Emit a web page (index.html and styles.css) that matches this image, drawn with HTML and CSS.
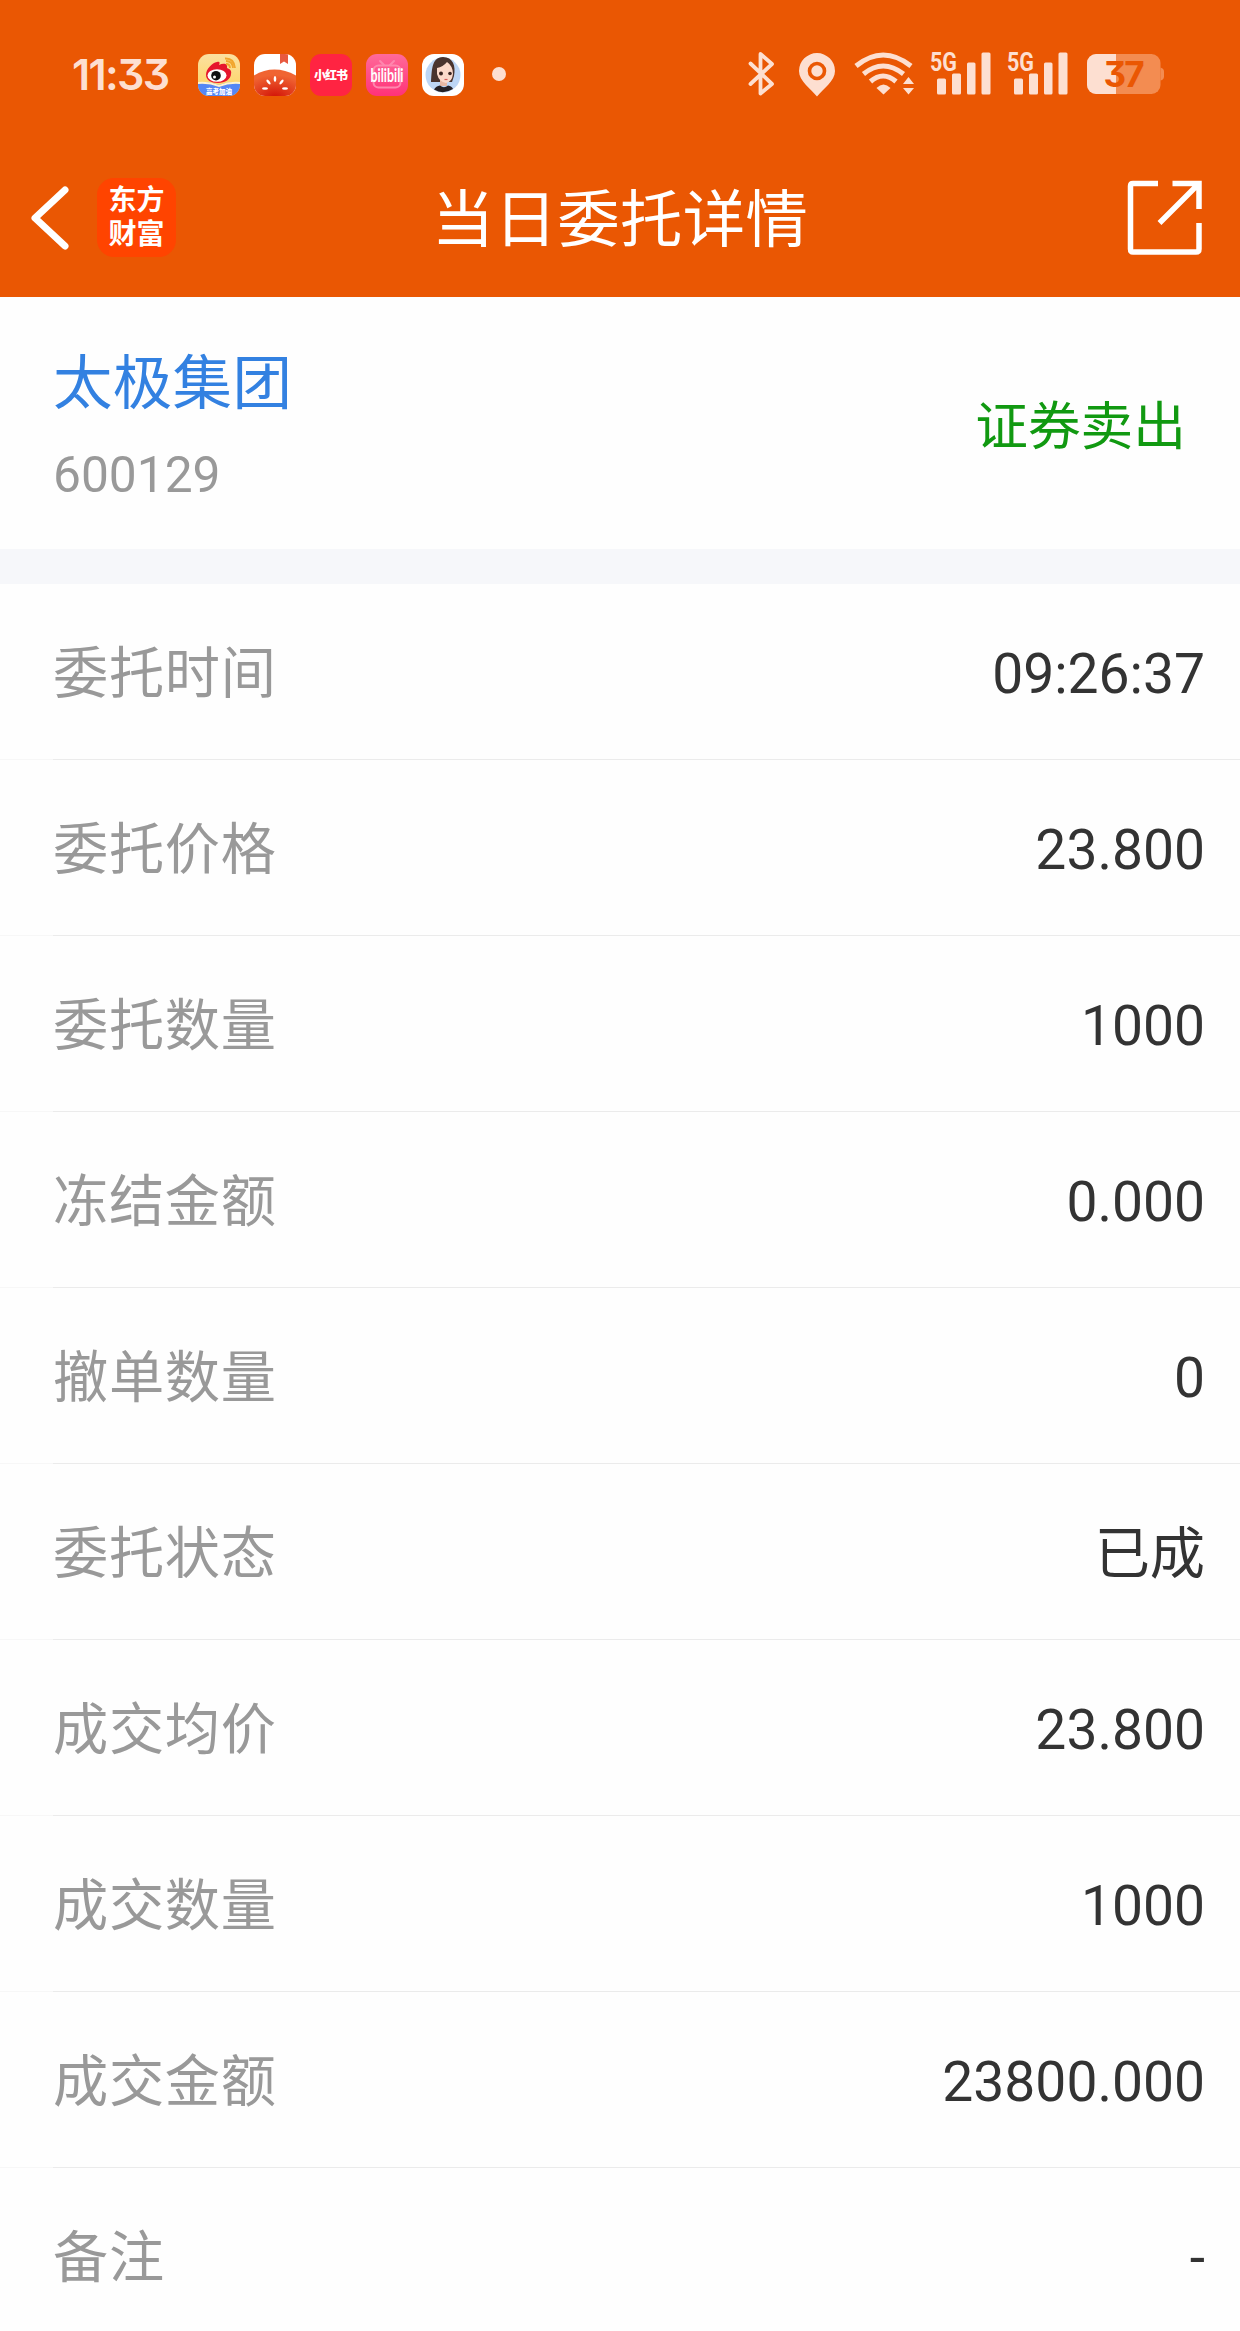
FILE: index.html
```html
<!DOCTYPE html>
<html lang="zh-CN">
<head>
<meta charset="UTF-8">
<meta name="viewport" content="width=device-width, initial-scale=1.0">
<title>当日委托详情</title>
<link rel="stylesheet" href="styles.css">
</head>
<body>
<div class="page">
    <header class="header">
        <!-- Status bar -->
        <div class="status-bar">
            <span class="clock">11:33</span>
            <div class="apps">
                <svg class="app" viewBox="0 0 42 42">
                    <defs>
                        <clipPath id="round"><rect width="42" height="42" rx="11"/></clipPath>
                        <linearGradient id="sun" x1="0" y1="0" x2="0" y2="1"><stop offset="0" stop-color="#fbe0a0"/><stop offset="1" stop-color="#ffd35c"/></linearGradient>
                    </defs>
                    <g clip-path="url(#round)">
                        <rect width="42" height="42" fill="url(#sun)"/>
                        <path d="M0 29Q11 27 21 31Q31 27 42 29V42H0z" fill="#5587f5"/>
                        <path d="M0 28Q11 27 21 31Q31 27 42 28V30Q31 29 21 33Q11 29 0 30z" fill="#fff3d0"/>
                    </g>
                    <path d="M8 21C8 15 14 9 19 8C22 7 22 9 21 11C25 9 30 9 29 14C32 15 34 17 33 20C33 25 27 29 20 29C13 29 8 26 8 21z" fill="#e6162d"/>
                    <ellipse cx="19" cy="21.5" rx="9.5" ry="6.3" fill="#fff"/>
                    <circle cx="18" cy="21.7" r="4.8" fill="#111"/>
                    <circle cx="16.5" cy="23" r="1.5" fill="#fff"/>
                    <path d="M28 10Q32 10 32 14M28 7Q34.500 7 35 14M27 4.500Q36 4 37 14" fill="none" stroke="#f1a52c" stroke-width="1.800"/>
                    <text class="app-tiny" x="21" y="40" text-anchor="middle">高考加油</text>
                </svg>
                <svg class="app" viewBox="0 0 42 42">
                    <defs><radialGradient id="tomato" cx=".5" cy="1" r=".8"><stop offset="0" stop-color="#d31408"/><stop offset="1" stop-color="#f06432"/></radialGradient></defs>
                    <g clip-path="url(#round)">
                        <rect width="42" height="42" fill="#fff"/>
                        <path d="M26 0h8v10l-4-2.500-4 2.500z" fill="#e85a40"/>
                        <path d="M-1 22Q20 9 43 22V43H-1z" fill="url(#tomato)"/>
                    </g>
                    <g fill="#fff">
                        <ellipse cx="21" cy="25" rx="1.300" ry="3"/>
                        <ellipse cx="14.500" cy="28" rx="1.300" ry="3" transform="rotate(-38 14.500 28)"/>
                        <ellipse cx="27.500" cy="28" rx="1.300" ry="3" transform="rotate(38 27.500 28)"/>
                        <ellipse cx="11" cy="34.500" rx="3" ry="1.300"/>
                        <ellipse cx="31" cy="34.500" rx="3" ry="1.300"/>
                    </g>
                </svg>
                <svg class="app" viewBox="0 0 42 42">
                    <rect width="42" height="42" rx="11" fill="#ff2442"/>
                    <text class="app-red" x="21" y="26" text-anchor="middle" textLength="34">小红书</text>
                </svg>
                <svg class="app" viewBox="0 0 42 42">
                    <defs><linearGradient id="pink" x1="0" y1="0" x2="0" y2="1"><stop offset="0" stop-color="#ff6a9a"/><stop offset="1" stop-color="#ff3278"/></linearGradient></defs>
                    <rect width="42" height="42" rx="11" fill="url(#pink)"/>
                    <g fill="none" stroke="#ff87ae" stroke-width="2" stroke-linecap="round">
                        <rect x="7.500" y="11.500" width="27" height="22" rx="5"/>
                        <path d="M14 7l4 4M28 7l-4 4"/>
                    </g>
                    <text class="app-bili" x="21" y="28" text-anchor="middle" textLength="33" lengthAdjust="spacingAndGlyphs">bilibili</text>
                </svg>
                <svg class="app" viewBox="0 0 42 42">
                    <rect width="42" height="42" rx="12" fill="#fff"/>
                    <circle cx="21" cy="21" r="17.500" fill="#bdd6f5"/>
                    <path d="M9 28C10 18 9 3 21 3C31 3 34 12 32 22L30 28z" fill="#49342f"/>
                    <path d="M18 24h7v8h-7z" fill="#e8b8a4"/>
                    <path d="M15 14Q21 13 25 8Q31 12 31 20Q30 28 24 29Q17 28 15 20z" fill="#fbd9ca"/>
                    <circle cx="19" cy="19.500" r="2" fill="#3a2420"/>
                    <circle cx="28" cy="19.500" r="1.800" fill="#3a2420"/>
                    <path d="M22.500 25.500h3" stroke="#d65a5a" stroke-width="1.200"/>
                    <path d="M12 35.500Q14 32 18 31.500Q22 35 26 31.500Q30 32 31 35Q21 41 12 35.500z" fill="#252126"/>
                </svg>
            </div>
            <span class="dot"></span>
            <!-- right side indicators, one drawing -->
            <svg class="indicators" viewBox="0 0 420 50" fill="#fddfd1">
                <path d="M10.500 14.500L32 35L20.500 44.500V5L32 15L10.500 35" fill="none" stroke="#fddfd1" stroke-width="3.800" stroke-linejoin="round" stroke-linecap="round"/>
                <path d="M77 47.500C71 40 59 32 59 22A18 18 0 0 1 95 22C95 32 83 40 77 47.500z"/>
                <circle cx="77" cy="22" r="7.500" fill="none" stroke="#ea5703" stroke-width="3.600"/>
                <g fill="none" stroke="#fddfd1" stroke-width="5">
                    <path d="M116 17Q143 -5 171 17"/>
                    <path d="M123.500 25Q143 9 163.500 25"/>
                    <path d="M130.500 32.500Q143 21.500 156 32.500"/>
                </g>
                <path d="M143.500 45.500L136.500 39Q143.500 32 150.500 39z"/>
                <path d="M168.500 28l5.500 7h-11zM168.500 45.500l5.500-6.500h-11z"/>
                <g id="signal">
                    <text class="net" x="190" y="21.500" textLength="27" lengthAdjust="spacingAndGlyphs">5G</text>
                    <rect x="197" y="29.500" width="9" height="16" rx="1.500"/>
                    <rect x="212" y="24.500" width="9" height="21" rx="1.500"/>
                    <rect x="227" y="13.500" width="8.500" height="32" rx="1.500"/>
                    <rect x="241.500" y="3.500" width="9" height="42" rx="1.500"/>
                </g>
                <use href="#signal" x="77"/>
                <rect x="347" y="5" width="73.500" height="40" rx="9" fill="#f38c51"/>
                <path d="M420.500 18.500q3.500 1 3.500 4v5q0 3-3.500 4z" fill="#f38c51"/>
                <path d="M376 5V45H356A9 9 0 0 1 347 36V14A9 9 0 0 1 356 5z"/>
                <text class="battery" x="384" y="38" text-anchor="middle" textLength="41">37</text>
            </svg>
        </div>

        <!-- Title bar -->
        <div class="nav">
            <div class="nav-left">
                <svg class="back" viewBox="0 0 38 64"><path d="M34 4L4 32L34 60" fill="none" stroke="#fff" stroke-width="7" stroke-linejoin="round" stroke-linecap="round"/></svg>
                <div class="brand"><span>东方</span><span>财富</span></div>
            </div>
            <h1 class="title">当日委托详情</h1>
            <svg class="share" viewBox="0 0 76 76" fill="none" stroke="#fff" stroke-width="5.500">
                <path d="M31 3.500H6Q3.500 3.500 3.500 6V69Q3.500 72 6 72H69Q72 72 72 69V43"/>
                <path d="M45.500 3.500H72V29M72 3.500L32.500 43"/>
            </svg>
        </div>
    </header>

    <section class="stock">
        <div>
            <div class="stock-name">太极集团</div>
            <div class="stock-code">600129</div>
        </div>
        <div class="side">证券卖出</div>
    </section>

    <main class="details">
        <div class="row"><span class="label">委托时间</span><span class="value">09:26:37</span></div>
        <div class="row"><span class="label">委托价格</span><span class="value">23.800</span></div>
        <div class="row"><span class="label">委托数量</span><span class="value">1000</span></div>
        <div class="row"><span class="label">冻结金额</span><span class="value">0.000</span></div>
        <div class="row"><span class="label">撤单数量</span><span class="value">0</span></div>
        <div class="row"><span class="label">委托状态</span><span class="value">已成</span></div>
        <div class="row"><span class="label">成交均价</span><span class="value">23.800</span></div>
        <div class="row"><span class="label">成交数量</span><span class="value">1000</span></div>
        <div class="row"><span class="label">成交金额</span><span class="value">23800.000</span></div>
        <div class="row"><span class="label">备注</span><span class="value">-</span></div>
    </main>
</div>
</body>
</html>
```
FILE: styles.css
```css
* {
    box-sizing: border-box;
}
body {
    margin: 0;
    font-family: Roboto, "Noto Sans CJK SC", sans-serif;
    background: #fefefe;
    color: #333;
}
.page {
    width: 1240px;
    height: 2331px;
    overflow: hidden;
}
svg {
    display: block;
    overflow: visible;
}

/* header */
.header {
    height: 297px;
    background: #ea5703;
    color: #fff;
}
.status-bar {
    display: flex;
    align-items: center;
    height: 148px;
    padding: 0 80px 0 72px;
}
.clock {
    width: 126px;
    font-family: Inter, sans-serif;
    font-size: 43px;
    font-weight: 600;
    line-height: 1;
    letter-spacing: -1.7px;
    font-feature-settings: "cv09";
    color: #fddfd1;
}
.apps {
    display: flex;
    gap: 14px;
    margin-top: 1px;
}
.app {
    width: 42px;
    height: 42px;
}
.app text {
    font-family: "Noto Sans CJK SC", sans-serif;
    font-weight: 900;
    fill: #fff;
}
.app .app-tiny {
    font-size: 6.5px;
}
.app .app-red {
    font-size: 12px;
}
.app .app-bili {
    font-family: Lato, sans-serif;
    font-size: 18px;
    font-weight: 700;
}
.dot {
    width: 14px;
    height: 14px;
    margin-left: 28px;
    border-radius: 50%;
    background: #fddfd1;
}
.indicators {
    width: 420px;
    height: 50px;
    margin-left: auto;
}
.net {
    font-family: Roboto, sans-serif;
    font-size: 25px;
    font-weight: 700;
}
.battery {
    font-family: Inter, sans-serif;
    font-size: 35px;
    font-weight: 700;
    font-feature-settings: "cv09";
    fill: #ea5703;
}
.nav {
    display: grid;
    grid-template-columns: 1fr auto 1fr;
    align-items: center;
    height: 139px;
    padding: 0 37px 0 31px;
}
.nav-left {
    display: flex;
    align-items: center;
    gap: 28px;
}
.back {
    width: 38px;
    height: 64px;
}
.brand {
    display: flex;
    flex-direction: column;
    align-items: center;
    justify-content: center;
    width: 79px;
    height: 79px;
    padding-bottom: 6px;
    border-radius: 17px;
    background: #ff4400;
    font-family: "Noto Sans CJK SC", sans-serif;
    font-size: 28px;
    font-weight: 700;
    line-height: 34px;
}
.title {
    margin: 0;
    padding: 7px 0 0 6px;
    font-size: 62.4px;
    font-weight: 400;
    line-height: 80px;
    letter-spacing: 0.4px;
}
.share {
    width: 76px;
    height: 76px;
    justify-self: end;
}

/* stock */
.stock {
    display: flex;
    align-items: center;
    justify-content: space-between;
    height: 287px;
    padding: 5px 54px 0 53px;
    border-bottom: 35px solid #f6f7fa;
}
.stock-name {
    font-size: 59.5px;
    line-height: 84px;
    letter-spacing: 0.3px;
    color: #3381e1;
}
.stock-code {
    margin-top: 14px;
    font-size: 49.7px;
    line-height: 70px;
    color: #999;
}
.side {
    padding-top: 2px;
    font-size: 52.7px;
    line-height: 70px;
    color: #119911;
}

/* order details */
.row {
    display: flex;
    align-items: center;
    justify-content: space-between;
    height: 176px;
    padding: 4px 35px 0 53px;
    background: linear-gradient(to right, #f7f7f7 53px, #ebebeb 53px) bottom / 100% 1px no-repeat;
    font-size: 55.2px;
    line-height: 80px;
}
.label {
    letter-spacing: 0.7px;
    color: #999;
}
.value {
    color: #333;
}
```
